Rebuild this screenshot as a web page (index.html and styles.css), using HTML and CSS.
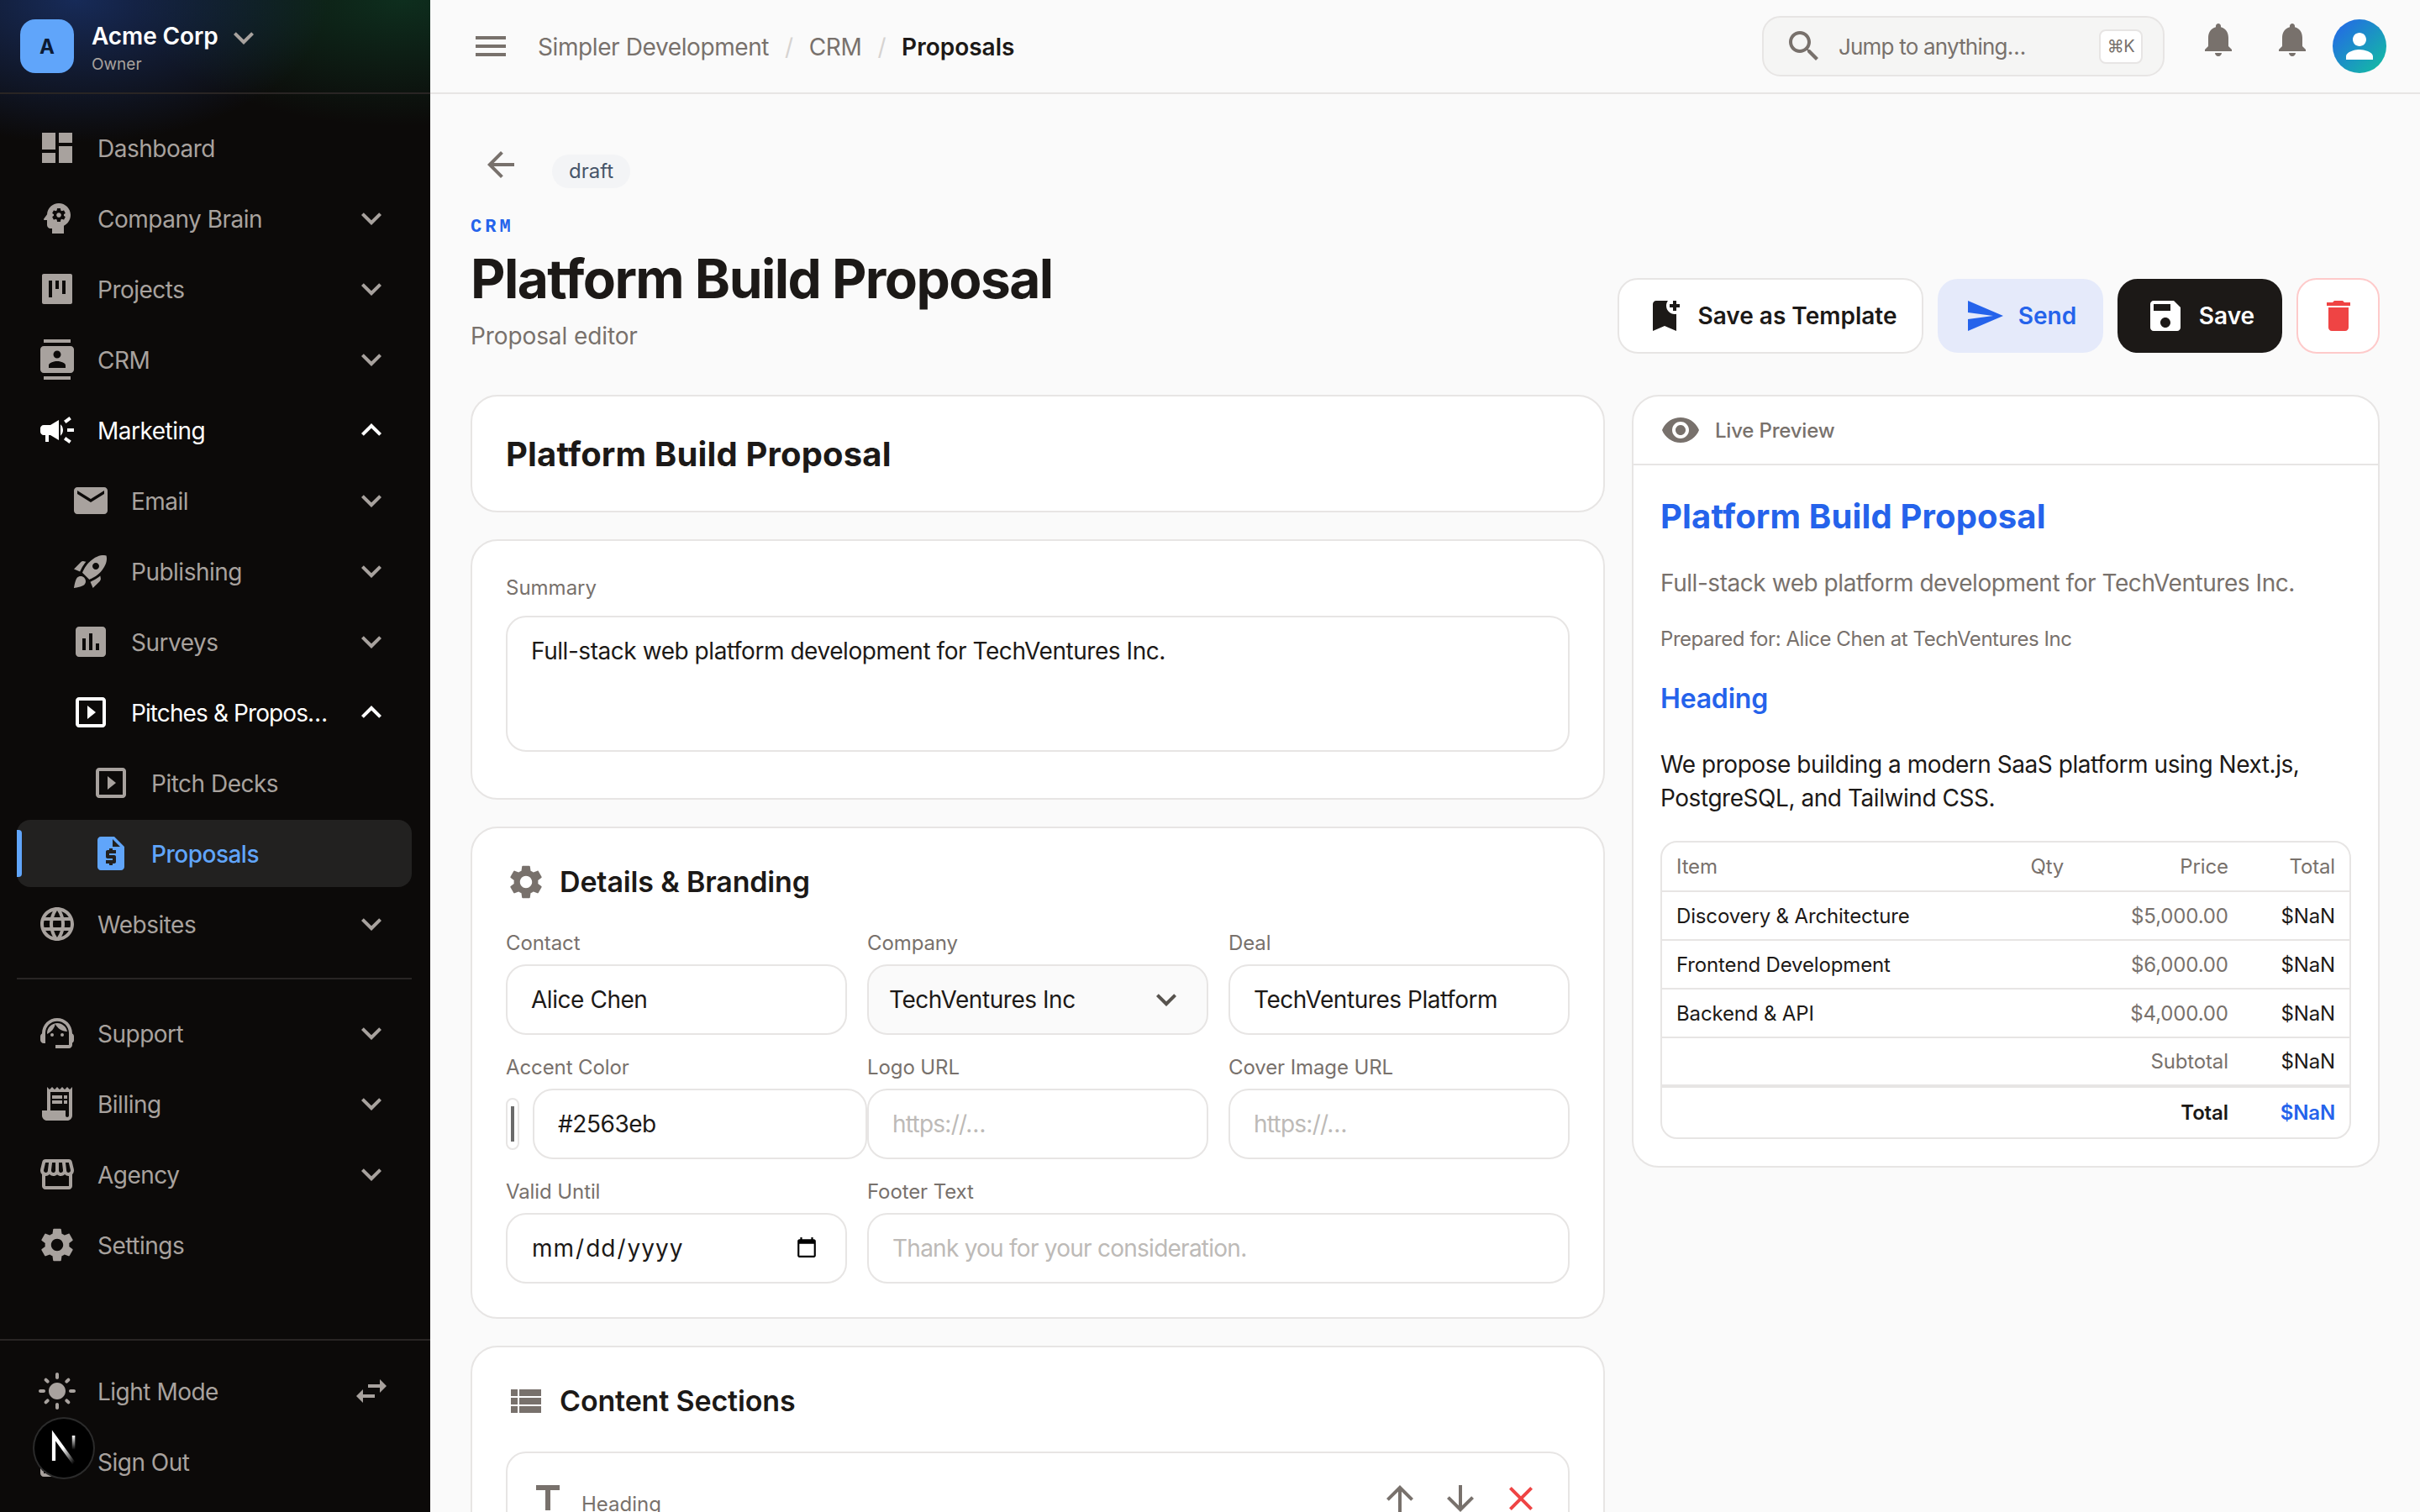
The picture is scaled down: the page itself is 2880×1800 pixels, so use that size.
FILE: index.html
```html
<!DOCTYPE html>
<html lang="en">
<head>
<meta charset="utf-8">
<title>Platform Build Proposal</title>
<link rel="stylesheet" href="styles.css">
</head>
<body>
<svg class="sprite" width="0" height="0">
<defs>
<symbol id="i-dashboard" viewBox="0 0 24 24"><path d="M3 13h8V3H3v10zm0 8h8v-6H3v6zm10 0h8V11h-8v10zm0-18v6h8V3h-8z"/></symbol>
<symbol id="i-brain" viewBox="0 0 24 24"><path d="M13 8.57c-.79 0-1.43.64-1.43 1.43s.64 1.43 1.43 1.43 1.43-.64 1.43-1.43-.64-1.43-1.43-1.43z"/><path d="M13 3C9.25 3 6.2 5.94 6.02 9.64L4.1 12.2c-.25.33-.01.8.4.8H6v3c0 1.1.9 2 2 2h1v3h7v-4.68c2.36-1.12 4-3.53 4-6.32 0-3.87-3.13-7-7-7zm3 7c0 .13-.01.26-.03.39l.83.66c.08.06.1.16.05.25l-.8 1.39c-.05.09-.16.12-.24.09l-.99-.4c-.21.16-.43.29-.67.39L14 13.83c-.01.1-.1.17-.2.17h-1.6c-.1 0-.18-.07-.2-.17l-.15-1.06c-.25-.1-.47-.23-.68-.39l-.99.4c-.09.03-.2 0-.25-.09l-.8-1.39c-.05-.08-.03-.19.05-.25l.84-.66c-.02-.13-.03-.26-.03-.39 0-.13.02-.27.04-.39l-.85-.66c-.08-.06-.1-.16-.05-.26l.8-1.38c.05-.09.15-.12.24-.09l1 .4c.2-.15.43-.29.67-.39L12 6.17c.02-.1.1-.17.2-.17h1.6c.1 0 .18.07.19.17l.15 1.06c.24.1.46.23.67.39l1-.4c.09-.03.2 0 .24.09l.8 1.38c.05.09.03.2-.05.26l-.85.66c.03.12.05.25.05.39z"/></symbol>
<symbol id="i-kanban" viewBox="0 0 24 24"><path d="M20 3H4c-.55 0-1 .45-1 1v16c0 .55.45 1 1 1h16c.55 0 1-.45 1-1V4c0-.55-.45-1-1-1zM9 17H7V7h2v10zm4-5h-2V7h2v5zm4 3h-2V7h2v8z"/></symbol>
<symbol id="i-contacts" viewBox="0 0 24 24"><path d="M20 0H4v2h16V0zM4 24h16v-2H4v2zM20 4H4c-1.1 0-2 .9-2 2v12c0 1.1.9 2 2 2h16c1.1 0 2-.9 2-2V6c0-1.1-.9-2-2-2zm-8 2.75c1.24 0 2.25 1.01 2.25 2.25s-1.01 2.25-2.25 2.25S9.75 10.24 9.75 9 10.76 6.75 12 6.75zM17 17H7v-1.5c0-1.67 3.33-2.5 5-2.5s5 .83 5 2.5V17z"/></symbol>
<symbol id="i-campaign" viewBox="0 0 24 24"><path d="M18 11v2h4v-2h-4zm-2 6.61c.96.71 2.21 1.65 3.2 2.39.4-.53.8-1.07 1.2-1.6-.99-.74-2.24-1.68-3.2-2.4-.4.54-.8 1.08-1.2 1.61zM20.4 5.6c-.4-.53-.8-1.07-1.2-1.6-.99.74-2.24 1.68-3.2 2.4.4.53.8 1.07 1.2 1.6.96-.72 2.21-1.65 3.2-2.4zM4 9c-1.1 0-2 .9-2 2v2c0 1.1.9 2 2 2h1v4h2v-4h1l5 3V6L8 9H4zm11.5 3c0-1.33-.58-2.53-1.5-3.35v6.69c.92-.81 1.5-2.01 1.5-3.34z"/></symbol>
<symbol id="i-email" viewBox="0 0 24 24"><path d="M20 4H4c-1.1 0-1.99.9-1.99 2L2 18c0 1.1.9 2 2 2h16c1.1 0 2-.9 2-2V6c0-1.1-.9-2-2-2zm0 4l-8 5-8-5V6l8 5 8-5v2z"/></symbol>
<symbol id="i-rocket" viewBox="0 0 24 24"><path d="M9.19 6.35c-2.04 2.29-3.44 5.58-3.57 5.89L2 10.69l4.05-4.05c.47-.47 1.15-.68 1.81-.55l1.33.26zM11.17 17s3.74-1.55 5.89-3.7c5.4-5.4 4.5-9.62 4.21-10.57-.95-.3-5.17-1.19-10.57 4.21C8.55 9.09 7 12.83 7 12.83L11.17 17zm6.48-2.19c-2.29 2.04-5.58 3.44-5.89 3.57L13.31 22l4.05-4.05c.47-.47.68-1.15.55-1.81l-.26-1.33zM9 18c0 .83-.34 1.58-.88 2.12C6.94 21.3 2 22 2 22s.7-4.94 1.88-6.12C4.42 15.34 5.17 15 6 15c1.66 0 3 1.34 3 3zm4-9c0-1.1.9-2 2-2s2 .9 2 2-.9 2-2 2-2-.9-2-2z"/></symbol>
<symbol id="i-poll" viewBox="0 0 24 24"><path d="M19 3H5c-1.1 0-2 .9-2 2v14c0 1.1.9 2 2 2h14c1.1 0 2-.9 2-2V5c0-1.1-.9-2-2-2zM9 17H7v-7h2v7zm4 0h-2V7h2v10zm4 0h-2v-4h2v4z"/></symbol>
<symbol id="i-slides" viewBox="0 0 24 24"><path d="M10 8v8l5-4-5-4zm9-5H5c-1.1 0-2 .9-2 2v14c0 1.1.9 2 2 2h14c1.1 0 2-.9 2-2V5c0-1.1-.9-2-2-2zm0 16H5V5h14v14z"/></symbol>
<symbol id="i-quote" viewBox="0 0 24 24"><path d="M14 2H6c-1.1 0-1.99.9-1.99 2L4 20c0 1.1.89 2 1.99 2H18c1.1 0 2-.9 2-2V8l-6-6zm1 10h-4v1h3c.55 0 1 .45 1 1v3c0 .55-.45 1-1 1h-1v1h-2v-1H9v-2h4v-1h-3c-.55 0-1-.45-1-1v-3c0-.55.45-1 1-1h1V9h2v1h2v2zm-2-4V3.5L17.5 8H13z"/></symbol>
<symbol id="i-globe" viewBox="0 0 24 24"><path d="M11.99 2C6.47 2 2 6.48 2 12s4.47 10 9.99 10C17.52 22 22 17.52 22 12S17.52 2 11.99 2zm6.93 6h-2.95c-.32-1.25-.78-2.45-1.38-3.56 1.84.63 3.37 1.91 4.33 3.56zM12 4.04c.83 1.2 1.48 2.53 1.91 3.96h-3.82c.43-1.43 1.08-2.76 1.91-3.96zM4.26 14C4.1 13.36 4 12.69 4 12s.1-1.36.26-2h3.38c-.08.66-.14 1.32-.14 2 0 .68.06 1.34.14 2H4.26zm.82 2h2.95c.32 1.25.78 2.45 1.38 3.56-1.84-.63-3.37-1.9-4.33-3.56zm2.95-8H5.08c.96-1.66 2.49-2.93 4.33-3.56C8.81 5.55 8.35 6.75 8.03 8zM12 19.96c-.83-1.2-1.48-2.53-1.91-3.96h3.82c-.43 1.43-1.08 2.76-1.91 3.96zM14.34 14H9.66c-.09-.66-.16-1.32-.16-2 0-.68.07-1.35.16-2h4.68c.09.65.16 1.32.16 2 0 .68-.07 1.34-.16 2zm.25 5.56c.6-1.11 1.06-2.31 1.38-3.56h2.95c-.96 1.65-2.49 2.93-4.33 3.56zM16.36 14c.08-.66.14-1.32.14-2 0-.68-.06-1.34-.14-2h3.38c.16.64.26 1.31.26 2s-.1 1.36-.26 2h-3.38z"/></symbol>
<symbol id="i-agent" viewBox="0 0 24 24"><path d="M21 12.22C21 6.73 16.74 3 12 3c-4.69 0-9 3.65-9 9.28-.6.34-1 .98-1 1.72v2c0 1.1.9 2 2 2h1v-6.1c0-3.87 3.13-7 7-7s7 3.13 7 7V19h-8v2h8c1.1 0 2-.9 2-2v-1.22c.59-.31 1-.92 1-1.64v-2.3c0-.7-.41-1.31-1-1.62z"/><circle cx="9" cy="13" r="1"/><circle cx="15" cy="13" r="1"/><path d="M18 11.03C17.52 8.18 15.04 6 12.05 6c-3.03 0-6.29 2.51-6.03 6.45 2.47-1.01 4.33-3.21 4.86-5.89 1.31 2.63 4 4.44 7.12 4.47z"/></symbol>
<symbol id="i-receipt" viewBox="0 0 24 24"><path d="M19.5 3.5L18 2l-1.5 1.5L15 2l-1.5 1.5L12 2l-1.5 1.5L9 2 7.5 3.5 6 2v14H3v3c0 1.66 1.34 3 3 3h12c1.66 0 3-1.34 3-3V2l-1.5 1.5zM19 19c0 .55-.45 1-1 1s-1-.45-1-1v-3H8V5h11v14z"/><path d="M9 7h6v2H9zm7 0h2v2h-2zm-7 3h6v2H9zm7 0h2v2h-2z"/></symbol>
<symbol id="i-store" viewBox="0 0 24 24"><path d="M21.9 8.89l-1.05-4.37c-.22-.9-1-1.52-1.91-1.52H5.05c-.9 0-1.69.63-1.9 1.52L2.1 8.89c-.24 1.02-.02 2.06.62 2.88.08.11.19.19.28.29V19c0 1.1.9 2 2 2h14c1.1 0 2-.9 2-2v-6.94c.09-.09.2-.18.28-.28.64-.82.87-1.87.62-2.89zm-2.99-3.9l1.05 4.37c.1.42.01.84-.25 1.17-.14.18-.44.47-.94.47-.61 0-1.14-.49-1.21-1.14L16.98 5l1.93-.01zM13 5h1.96l.54 4.52c.05.39-.07.78-.33 1.07-.22.26-.54.41-.95.41-.67 0-1.22-.59-1.22-1.31V5zM8.49 9.52L9.04 5H11v4.69c0 .72-.55 1.31-1.29 1.31-.34 0-.65-.15-.89-.41-.25-.29-.37-.68-.33-1.07zm-4.45-.16L5.05 5h1.97l-.58 4.86c-.08.65-.6 1.14-1.21 1.14-.49 0-.8-.29-.93-.47-.27-.32-.36-.75-.26-1.17zM5 19v-6.03c.08.01.15.03.23.03.87 0 1.66-.36 2.24-.95.6.6 1.4.95 2.31.95.87 0 1.65-.36 2.23-.93.59.57 1.39.93 2.29.93.84 0 1.64-.35 2.24-.95.58.59 1.37.95 2.24.95.08 0 .15-.02.23-.03V19H5z"/></symbol>
<symbol id="i-gear" viewBox="0 0 24 24"><path d="M19.14 12.94c.04-.3.06-.61.06-.94 0-.32-.02-.64-.07-.94l2.03-1.58c.18-.14.23-.41.12-.61l-1.92-3.32c-.12-.22-.37-.29-.59-.22l-2.39.96c-.5-.38-1.03-.7-1.62-.94l-.36-2.54c-.04-.24-.24-.41-.48-.41h-3.84c-.24 0-.43.17-.47.41l-.36 2.54c-.59.24-1.13.57-1.62.94l-2.39-.96c-.22-.08-.47 0-.59.22L2.74 8.87c-.12.21-.08.47.12.61l2.03 1.58c-.05.3-.09.63-.09.94s.02.64.07.94l-2.03 1.58c-.18.14-.23.41-.12.61l1.92 3.32c.12.22.37.29.59.22l2.39-.96c.5.38 1.03.7 1.62.94l.36 2.54c.05.24.24.41.48.41h3.84c.24 0 .44-.17.47-.41l.36-2.54c.59-.24 1.13-.56 1.62-.94l2.39.96c.22.08.47 0 .59-.22l1.92-3.32c.12-.22.07-.47-.12-.61l-2.01-1.58zM12 15.6c-1.98 0-3.6-1.62-3.6-3.6s1.62-3.6 3.6-3.6 3.6 1.62 3.6 3.6-1.62 3.6-3.6 3.6z"/></symbol>
<symbol id="i-sun" viewBox="0 0 24 24"><path d="M12 7c-2.76 0-5 2.24-5 5s2.24 5 5 5 5-2.24 5-5-2.24-5-5-5zM2 13h2c.55 0 1-.45 1-1s-.45-1-1-1H2c-.55 0-1 .45-1 1s.45 1 1 1zm18 0h2c.55 0 1-.45 1-1s-.45-1-1-1h-2c-.55 0-1 .45-1 1s.45 1 1 1zM11 2v2c0 .55.45 1 1 1s1-.45 1-1V2c0-.55-.45-1-1-1s-1 .45-1 1zm0 18v2c0 .55.45 1 1 1s1-.45 1-1v-2c0-.55-.45-1-1-1s-1 .45-1 1zM5.99 4.58c-.39-.39-1.03-.39-1.41 0-.39.39-.39 1.03 0 1.41l1.06 1.06c.39.39 1.03.39 1.41 0s.39-1.03 0-1.41L5.99 4.58zm12.37 12.37c-.39-.39-1.03-.39-1.41 0-.39.39-.39 1.03 0 1.41l1.06 1.06c.39.39 1.03.39 1.41 0 .39-.39.39-1.03 0-1.41l-1.06-1.06zm1.06-10.96c.39-.39.39-1.03 0-1.41-.39-.39-1.03-.39-1.41 0l-1.06 1.06c-.39.39-.39 1.03 0 1.41s1.03.39 1.41 0l1.06-1.06zM7.05 18.36c.39-.39.39-1.03 0-1.41-.39-.39-1.03-.39-1.41 0l-1.06 1.06c-.39.39-.39 1.03 0 1.41s1.03.39 1.41 0l1.06-1.06z"/></symbol>
<symbol id="i-swap" viewBox="0 0 24 24"><path d="M6.99 11L3 15l3.99 4v-3H14v-2H6.99v-3zM21 9l-3.99-4v3H10v2h7.01v3L21 9z"/></symbol>
<symbol id="i-logout" viewBox="0 0 24 24"><path d="M17 7l-1.41 1.41L18.17 11H8v2h10.17l-2.58 2.58L17 17l5-5zM4 5h8V3H4c-1.1 0-2 .9-2 2v14c0 1.1.9 2 2 2h8v-2H4V5z"/></symbol>
<symbol id="i-more" viewBox="0 0 24 24"><path d="M16.59 8.59L12 13.17 7.41 8.59 6 10l6 6 6-6z"/></symbol>
<symbol id="i-less" viewBox="0 0 24 24"><path d="M12 8l-6 6 1.41 1.41L12 10.83l4.59 4.58L18 14z"/></symbol>
<symbol id="i-menu" viewBox="0 0 24 24"><path d="M3 18h18v-2H3v2zm0-5h18v-2H3v2zm0-7v2h18V6H3z"/></symbol>
<symbol id="i-search" viewBox="0 0 24 24"><path d="M15.5 14h-.79l-.28-.27C15.41 12.59 16 11.11 16 9.5 16 5.91 13.09 3 9.5 3S3 5.91 3 9.5 5.91 16 9.5 16c1.61 0 3.09-.59 4.23-1.57l.27.28v.79l5 4.99L20.49 19l-4.99-5zm-6 0C7.01 14 5 11.99 5 9.5S7.01 5 9.5 5 14 7.01 14 9.5 11.99 14 9.5 14z"/></symbol>
<symbol id="i-bell" viewBox="0 0 24 24"><path d="M12 22c1.1 0 2-.9 2-2h-4c0 1.1.89 2 2 2zm6-6v-5c0-3.07-1.64-5.64-4.5-6.32V4c0-.83-.67-1.5-1.5-1.5s-1.5.67-1.5 1.5v.68C7.63 5.36 6 7.92 6 11v5l-2 2v1h16v-1l-2-2z"/></symbol>
<symbol id="i-person" viewBox="0 0 24 24"><path d="M12 12c2.21 0 4-1.79 4-4s-1.79-4-4-4-4 1.79-4 4 1.79 4 4 4zm0 2c-2.67 0-8 1.34-8 4v2h16v-2c0-2.66-5.33-4-8-4z"/></symbol>
<symbol id="i-back" viewBox="0 0 24 24"><path d="M20 11H7.83l5.59-5.59L12 4l-8 8 8 8 1.41-1.41L7.83 13H20v-2z"/></symbol>
<symbol id="i-bookmark" viewBox="0 0 24 24"><path d="M21 7h-2v2h-2V7h-2V5h2V3h2v2h2v2zm-2 14l-7-3-7 3V5c0-1.1.9-2 2-2h7c-.63.84-1 1.87-1 3 0 2.76 2.24 5 5 5 .34 0 .68-.03 1-.1V21z"/></symbol>
<symbol id="i-send" viewBox="0 0 24 24"><path d="M2.01 21L23 12 2.01 3 2 10l15 2-15 2z"/></symbol>
<symbol id="i-save" viewBox="0 0 24 24"><path d="M17 3H5c-1.11 0-2 .9-2 2v14c0 1.1.89 2 2 2h14c1.1 0 2-.9 2-2V7l-4-4zm-5 16c-1.66 0-3-1.34-3-3s1.34-3 3-3 3 1.34 3 3-1.34 3-3 3zm3-10H5V5h10v4z"/></symbol>
<symbol id="i-delete" viewBox="0 0 24 24"><path d="M6 19c0 1.1.9 2 2 2h8c1.1 0 2-.9 2-2V7H6v12zM19 4h-3.5l-1-1h-5l-1 1H5v2h14V4z"/></symbol>
<symbol id="i-eye" viewBox="0 0 24 24"><path d="M12 4.5C7 4.5 2.73 7.61 1 12c1.73 4.39 6 7.5 11 7.5s9.27-3.11 11-7.5c-1.73-4.39-6-7.5-11-7.5zM12 17c-2.76 0-5-2.24-5-5s2.24-5 5-5 5 2.24 5 5-2.24 5-5 5zm0-8c-1.66 0-3 1.34-3 3s1.34 3 3 3 3-1.34 3-3-1.34-3-3-3z"/></symbol>
<symbol id="i-list" viewBox="0 0 24 24"><path d="M3 14h4v-4H3v4zm0 5h4v-4H3v4zM3 9h4V5H3v4zm5 5h13v-4H8v4zm0 5h13v-4H8v4zM8 5v4h13V5H8z"/></symbol>
<symbol id="i-title" viewBox="0 0 24 24"><path d="M5 4v3h5.5v12h3V7H19V4z"/></symbol>
<symbol id="i-up" viewBox="0 0 24 24"><path d="M4 12l1.41 1.41L11 7.83V20h2V7.83l5.58 5.59L20 12l-8-8-8 8z"/></symbol>
<symbol id="i-down" viewBox="0 0 24 24"><path d="M20 12l-1.41-1.41L13 16.17V4h-2v12.17l-5.58-5.59L4 12l8 8 8-8z"/></symbol>
<symbol id="i-close" viewBox="0 0 24 24"><path d="M19 6.41L17.59 5 12 10.59 6.41 5 5 6.41 10.59 12 5 17.59 6.41 19 12 13.41 17.59 19 19 17.59 13.41 12z"/></symbol>
<linearGradient id="next-n" x1="0" y1="0" x2="1" y2="1"><stop offset="0.45" stop-color="#fff"/><stop offset="1" stop-color="#fff" stop-opacity="0"/></linearGradient>
<linearGradient id="next-bar" x1="0" y1="0" x2="0" y2="1"><stop offset="0" stop-color="#fff"/><stop offset="0.8" stop-color="#fff" stop-opacity="0"/></linearGradient>
</defs>
</svg>

<div class="app">
  <aside class="sidebar">
    <div class="brand">
      <div class="brand-logo">A</div>
      <div class="brand-text">
        <div class="brand-name">Acme Corp</div>
        <div class="brand-role">Owner</div>
      </div>
      <svg class="icon brand-chevron"><use href="#i-more"/></svg>
    </div>
    <nav class="nav">
      <a class="item"><svg class="icon"><use href="#i-dashboard"/></svg><span class="label">Dashboard</span></a>
      <a class="item"><svg class="icon"><use href="#i-brain"/></svg><span class="label">Company Brain</span><svg class="icon"><use href="#i-more"/></svg></a>
      <a class="item"><svg class="icon"><use href="#i-kanban"/></svg><span class="label">Projects</span><svg class="icon"><use href="#i-more"/></svg></a>
      <a class="item"><svg class="icon"><use href="#i-contacts"/></svg><span class="label">CRM</span><svg class="icon"><use href="#i-more"/></svg></a>
      <a class="item open"><svg class="icon"><use href="#i-campaign"/></svg><span class="label">Marketing</span><svg class="icon"><use href="#i-less"/></svg></a>
      <a class="item lvl1"><svg class="icon"><use href="#i-email"/></svg><span class="label">Email</span><svg class="icon"><use href="#i-more"/></svg></a>
      <a class="item lvl1"><svg class="icon"><use href="#i-rocket"/></svg><span class="label">Publishing</span><svg class="icon"><use href="#i-more"/></svg></a>
      <a class="item lvl1"><svg class="icon"><use href="#i-poll"/></svg><span class="label">Surveys</span><svg class="icon"><use href="#i-more"/></svg></a>
      <a class="item lvl1 open"><svg class="icon"><use href="#i-slides"/></svg><span class="label">Pitches &amp; Proposals</span><svg class="icon"><use href="#i-less"/></svg></a>
      <a class="item lvl2"><svg class="icon"><use href="#i-slides"/></svg><span class="label">Pitch Decks</span></a>
      <a class="item lvl2 active"><svg class="icon"><use href="#i-quote"/></svg><span class="label">Proposals</span></a>
      <a class="item"><svg class="icon"><use href="#i-globe"/></svg><span class="label">Websites</span><svg class="icon"><use href="#i-more"/></svg></a>
      <div class="nav-divider"></div>
      <a class="item"><svg class="icon"><use href="#i-agent"/></svg><span class="label">Support</span><svg class="icon"><use href="#i-more"/></svg></a>
      <a class="item"><svg class="icon"><use href="#i-receipt"/></svg><span class="label">Billing</span><svg class="icon"><use href="#i-more"/></svg></a>
      <a class="item"><svg class="icon"><use href="#i-store"/></svg><span class="label">Agency</span><svg class="icon"><use href="#i-more"/></svg></a>
      <a class="item"><svg class="icon"><use href="#i-gear"/></svg><span class="label">Settings</span></a>
    </nav>
    <div class="side-foot">
      <a class="item"><svg class="icon"><use href="#i-sun"/></svg><span class="label">Light Mode</span><svg class="icon"><use href="#i-swap"/></svg></a>
      <a class="item"><svg class="icon"><use href="#i-logout"/></svg><span class="label">Sign Out</span></a>
    </div>
    <div class="next-badge">
      <svg viewBox="0 0 40 40" width="60" height="60"><path d="M12 30V10l16 22" fill="none" stroke="url(#next-n)" stroke-width="2.8"/><rect x="26.5" y="10" width="2.4" height="14" fill="url(#next-bar)"/></svg>
    </div>
  </aside>

  <div class="main">
    <header class="topbar">
      <svg class="icon tb-menu"><use href="#i-menu"/></svg>
      <div class="crumbs">
        <span>Simpler Development</span><span class="sep">/</span><span>CRM</span><span class="sep">/</span><strong>Proposals</strong>
      </div>
      <div class="search">
        <svg class="icon"><use href="#i-search"/></svg>
        <span class="search-text">Jump to anything…</span>
        <kbd class="kbd">⌘K</kbd>
      </div>
      <svg class="icon tb-bell"><use href="#i-bell"/></svg>
      <svg class="icon tb-bell"><use href="#i-bell"/></svg>
      <div class="avatar"><svg class="icon"><use href="#i-person"/></svg></div>
    </header>

    <main class="page">
      <div class="back-row">
        <button class="back-btn"><svg class="icon"><use href="#i-back"/></svg></button>
        <span class="chip">draft</span>
      </div>
      <div class="page-head">
        <div>
          <div class="eyebrow">CRM</div>
          <h1 class="page-title">Platform Build Proposal</h1>
          <p class="page-sub">Proposal editor</p>
        </div>
        <div class="actions">
          <button class="btn btn-outline"><svg class="icon"><use href="#i-bookmark"/></svg>Save as Template</button>
          <button class="btn btn-soft"><svg class="icon"><use href="#i-send"/></svg>Send</button>
          <button class="btn btn-dark"><svg class="icon"><use href="#i-save"/></svg>Save</button>
          <button class="btn btn-danger"><svg class="icon"><use href="#i-delete"/></svg></button>
        </div>
      </div>

      <div class="columns">
        <div class="stack">
          <section class="card">
            <input class="title-input" value="Platform Build Proposal">
          </section>
          <section class="card">
            <label class="label-top">Summary</label>
            <textarea class="textarea">Full-stack web platform development for TechVentures Inc.</textarea>
          </section>
          <section class="card">
            <h2 class="section-head"><svg class="icon"><use href="#i-gear"/></svg>Details &amp; Branding</h2>
            <div class="form-grid">
              <div class="field"><label class="field-label">Contact</label><input class="input" value="Alice Chen"></div>
              <div class="field"><label class="field-label">Company</label>
                <div class="input select"><span>TechVentures Inc</span><svg class="icon"><use href="#i-more"/></svg></div></div>
              <div class="field"><label class="field-label">Deal</label><input class="input" value="TechVentures Platform"></div>
              <div class="field"><label class="field-label">Accent Color</label>
                <div class="color-row"><span class="swatch"><i></i></span><input class="input color-text" value="#2563eb"></div></div>
              <div class="field"><label class="field-label">Logo URL</label><input class="input" placeholder="https://…"></div>
              <div class="field"><label class="field-label">Cover Image URL</label><input class="input" placeholder="https://…"></div>
              <div class="field"><label class="field-label">Valid Until</label><input class="input date" type="date"></div>
              <div class="field span2"><label class="field-label">Footer Text</label><input class="input" placeholder="Thank you for your consideration."></div>
            </div>
          </section>
          <section class="card">
            <h2 class="section-head"><svg class="icon"><use href="#i-list"/></svg>Content Sections</h2>
            <div class="block">
              <div class="block-head">
                <svg class="icon"><use href="#i-title"/></svg>
                <span class="block-name">Heading</span>
                <svg class="icon"><use href="#i-up"/></svg>
                <svg class="icon"><use href="#i-down"/></svg>
                <svg class="icon icon-red"><use href="#i-close"/></svg>
              </div>
            </div>
          </section>
        </div>

        <aside class="card preview">
          <div class="preview-head"><svg class="icon"><use href="#i-eye"/></svg>Live Preview</div>
          <div class="preview-body">
            <h2 class="pv-title">Platform Build Proposal</h2>
            <p class="pv-summary">Full-stack web platform development for TechVentures Inc.</p>
            <p class="pv-prepared">Prepared for: Alice Chen at TechVentures Inc</p>
            <h3 class="pv-heading">Heading</h3>
            <p class="pv-para">We propose building a modern SaaS platform using Next.js, PostgreSQL, and Tailwind CSS.</p>
            <div class="table-wrap">
              <table class="pv-table">
                <colgroup><col class="c-item"><col class="c-qty"><col class="c-price"><col class="c-total"></colgroup>
                <thead><tr><th>Item</th><th>Qty</th><th class="num">Price</th><th class="num">Total</th></tr></thead>
                <tbody>
                  <tr><td>Discovery &amp; Architecture</td><td></td><td class="num muted">$5,000.00</td><td class="num">$NaN</td></tr>
                  <tr><td>Frontend Development</td><td></td><td class="num muted">$6,000.00</td><td class="num">$NaN</td></tr>
                  <tr><td>Backend &amp; API</td><td></td><td class="num muted">$4,000.00</td><td class="num">$NaN</td></tr>
                  <tr class="sub"><td></td><td></td><td class="num muted">Subtotal</td><td class="num">$NaN</td></tr>
                  <tr class="grand"><td></td><td></td><td class="num">Total</td><td class="num accent">$NaN</td></tr>
                </tbody>
              </table>
            </div>
          </div>
        </aside>
      </div>
    </main>
  </div>
</div>
</body>
</html>
```

FILE: styles.css
```css
* { box-sizing: border-box; }
html, body { margin: 0; height: 100%; overflow: hidden; }
body { font-family: Inter, "Liberation Sans", sans-serif; color: #1c1917; background: #fafafa; font-size: 28px; letter-spacing: -0.45px; }
.sprite { position: absolute; }
.icon { width: 48px; height: 48px; fill: currentColor; flex: none; display: block; }
h1, h2, h3, p { margin: 0; }
button, input, textarea { font-family: inherit; letter-spacing: inherit; }

.app { display: flex; height: 1800px; }

/* sidebar */
.sidebar {
  width: 512px; flex: none; position: relative; display: flex; flex-direction: column; color: #a8a29e;
  background:
    radial-gradient(300px 170px at 90px 0, rgba(30, 64, 140, .6), transparent 100%),
    radial-gradient(320px 150px at 480px 0, rgba(16, 90, 55, .45), transparent 100%),
    #0c0a09;
}
.brand { height: 112px; display: flex; align-items: center; padding-left: 24px; border-bottom: 2px solid #292524; flex: none; }
.brand-logo { width: 64px; height: 64px; border-radius: 18px; background: #60a5fa; color: #0c1a33; font-weight: 700; font-size: 24px; display: flex; align-items: center; justify-content: center; letter-spacing: 0; }
.brand-text { margin-left: 21px; padding-top: 3px; letter-spacing: 0; }
.brand-name { color: #fff; font-size: 28px; font-weight: 600; line-height: 36px; margin-top: 2px; letter-spacing: -0.1px; }
.brand-role { font-size: 19px; line-height: 28px; color: #a8a29e; margin-top: 2px; }
.brand-chevron { margin: -20px 0 0 6px; }

.nav { flex: 1; padding: 24px 22px 0 20px; display: flex; flex-direction: column; gap: 4px; min-height: 0; }
.item { height: 80px; flex: none; display: flex; align-items: center; gap: 24px; padding: 0 24px; border-radius: 16px; position: relative; }
.item .label { flex: 1; min-width: 0; white-space: nowrap; overflow: hidden; text-overflow: ellipsis; font-size: 28px; letter-spacing: -0.5px; padding-top: 1px; }
.lvl1 { padding-left: 64px; }
.lvl2 { padding-left: 88px; }
.open { color: #fff; }
.lvl1.open .label { margin-right: -6px; letter-spacing: -0.9px; }
.active { background: #222120; color: #60a5fa; font-weight: 500; }
.active::before { content: ""; position: absolute; left: 0; top: 12px; bottom: 12px; width: 6px; background: #60a5fa; border-radius: 0 4px 4px 0; }
.nav-divider { height: 2px; background: #292524; margin: 20px 0; flex: none; }
.side-foot { flex: none; border-top: 2px solid #292524; padding: 20px 22px 20px 20px; display: flex; flex-direction: column; gap: 4px; }
.next-badge { position: absolute; left: 41px; top: 1689px; width: 70px; height: 70px; border-radius: 50%; background: #000; box-shadow: 0 0 0 2px #2b2b2b; display: flex; align-items: center; justify-content: center; }

/* main */
.main { flex: 1; min-width: 0; display: flex; flex-direction: column; }
.topbar { height: 112px; flex: none; display: flex; align-items: center; padding: 0 40px 0 48px; border-bottom: 2px solid #e7e5e4; color: #78716c; }
.crumbs { flex: 1; display: flex; align-items: center; margin-left: 32px; font-size: 28px; letter-spacing: -0.4px; padding-top: 2px; }
.crumbs .sep { color: #d6d3d1; margin: 0 19px; }
.crumbs strong { color: #1c1917; font-weight: 600; letter-spacing: 0; }
.search { width: 479px; height: 72px; border: 2px solid #e7e5e4; border-radius: 22px; background: #f5f5f4; display: flex; align-items: center; padding: 0 24px; gap: 17px; }
.search-text { flex: 1; font-size: 26px; letter-spacing: -0.8px; }
.kbd { width: 52px; height: 41px; background: #fff; border: 2px solid #e7e5e4; border-radius: 8px; font-family: inherit; font-size: 20px; display: flex; align-items: center; justify-content: center; }
.tb-bell { margin: 0 0 16px 40px; }
.avatar { width: 64px; height: 64px; border-radius: 50%; margin-left: 24px; background: linear-gradient(135deg, #2563eb, #14b8a6 90%); color: #fff; display: flex; align-items: center; justify-content: center; }

.page { flex: 1; min-height: 0; overflow: hidden; padding: 48px 48px 0; }
.back-row { display: flex; align-items: center; gap: 24px; }
.back-btn { width: 72px; height: 72px; padding: 12px; border: 0; background: none; color: #78716c; }
.chip { height: 40px; margin: 16px 0 0 1px; padding: 0 20px; border-radius: 20px; background: #f3f4f6; color: #475569; font-size: 24px; line-height: 40px; letter-spacing: 0; }
.page-head { display: flex; justify-content: space-between; align-items: flex-end; margin-top: 24px; }
.eyebrow { font-family: "Liberation Mono", monospace; font-size: 22px; line-height: 28px; font-weight: 700; letter-spacing: 4px; color: #2563eb; margin-top: 1px; }
.page-title { font-size: 64px; line-height: 88px; font-weight: 700; letter-spacing: -1.55px; margin-top: 3px; }
.page-sub { font-size: 28px; line-height: 40px; color: #78716c; margin: 4px 0 1px; letter-spacing: -0.1px; }
.actions { display: flex; align-items: center; gap: 17px; }
.btn { height: 88px; border-radius: 24px; border: 0; font-size: 28px; font-weight: 600; display: flex; align-items: center; justify-content: center; gap: 16px; padding: 0 24px; white-space: nowrap; letter-spacing: 0; }
.btn-outline { height: 90px; width: 364px; background: #fff; border: 2px solid #e7e5e4; color: #1c1917; }
.btn-soft { width: 197px; background: #e5eafa; color: #2563eb; }
.btn-dark { width: 196px; background: #1c1917; color: #fff; }
.btn-danger { height: 90px; width: 99px; padding: 0; background: #fff; border: 2px solid #fecaca; color: #ef4444; }

.columns { display: grid; grid-template-columns: 1350px 890px; gap: 32px; margin-top: 49px; align-items: start; }
.stack { display: flex; flex-direction: column; gap: 32px; }
.card { background: #fff; border: 2px solid #e7e5e4; border-radius: 32px; padding: 40px; }

.title-input { display: block; width: 100%; height: 56px; border: 0; padding: 0; outline: 0; font-size: 40px; font-weight: 700; letter-spacing: 0.15px; color: #1c1917; background: none; }
.label-top { display: block; font-size: 24px; line-height: 32px; color: #78716c; margin-bottom: 17px; letter-spacing: 0; }
.textarea { display: block; width: 100%; height: 162px; margin-bottom: 15px; border: 2px solid #e7e5e4; border-radius: 24px; padding: 20px 28px; font-size: 28px; line-height: 40px; color: #1c1917; resize: none; outline: 0; }
.section-head { display: flex; align-items: center; gap: 16px; font-size: 34px; font-weight: 600; line-height: 48px; letter-spacing: -0.15px; }
.section-head .icon { color: #78716c; }
.form-grid { display: grid; grid-template-columns: repeat(3, 1fr); column-gap: 24px; row-gap: 23px; margin-top: 33px; }
.field { min-width: 0; display: flex; flex-direction: column; gap: 9px; }
.span2 { grid-column: span 2; }
.field-label { font-size: 24px; line-height: 32px; color: #78716c; letter-spacing: -0.1px; }
.input { display: block; width: 100%; height: 84px; border: 2px solid #e7e5e4; border-radius: 24px; padding: 0 28px; font-size: 28px; color: #1c1917; background: #fff; outline: 0; }
.input::placeholder { color: #bdbab7; opacity: 1; letter-spacing: -0.75px; }
.select { display: flex; align-items: center; justify-content: space-between; background: #fafafa; padding: 0 24px 0 24px; }
.select .icon { color: #57534e; }
.color-row { display: flex; align-items: center; gap: 16px; margin-right: -24px; }
.swatch { width: 16px; height: 62px; flex: none; border: 2px solid #e7e5e4; border-radius: 8px; padding: 8px 4px; }
.swatch i { display: block; height: 100%; width: 4px; background: #6b6b6b; }
.color-text { flex: 1; width: auto; min-width: 0; }
.date { padding-right: 30px; letter-spacing: 1px; }

.block { margin-top: 36px; border: 2px solid #e7e5e4; border-radius: 24px; padding: 30px 32px 30px 24px; }
.block-head { display: flex; align-items: center; gap: 24px; color: #78716c; }
.block-name { flex: 1; font-size: 24px; margin: 12px 0 0 -8px; letter-spacing: 0; }
.icon-red { color: #ef4444; }

.preview { padding: 0; }
.preview-head { height: 82px; display: flex; align-items: center; gap: 17px; padding: 0 32px; border-bottom: 2px solid #e7e5e4; color: #78716c; font-size: 24px; font-weight: 500; letter-spacing: -0.2px; }
.preview-body { padding: 33px 32px 32px; }
.pv-title { font-size: 40px; line-height: 56px; font-weight: 700; letter-spacing: 0.15px; color: #2563eb; }
.pv-summary { font-size: 28px; line-height: 40px; color: #78716c; margin-top: 31px; }
.pv-prepared { font-size: 24px; line-height: 34px; color: #78716c; margin-top: 30px; }
.pv-heading { font-size: 32px; line-height: 48px; font-weight: 600; letter-spacing: -0.2px; color: #2563eb; margin-top: 30px; }
.pv-para { font-size: 28px; line-height: 40px; margin-top: 34px; }
.table-wrap { margin-top: 31px; border: 2px solid #e7e5e4; border-radius: 20px; overflow: hidden; }
.pv-table { width: 100%; table-layout: fixed; border-collapse: collapse; font-size: 24px; letter-spacing: -0.15px; }
.c-item { width: 421px; }
.c-qty { width: 118px; }
.c-price { width: 151px; }
.c-total { width: 127px; }
.pv-table th, .pv-table td { height: 58px; padding: 0 17px; text-align: left; border-bottom: 2px solid #e7e5e4; font-weight: 400; }
.pv-table th { color: #78716c; }
.pv-table .num { text-align: right; }
.muted { color: #78716c; }
.pv-table .sub td { border-bottom-width: 4px; }
.pv-table .grand td { border-bottom: 0; font-weight: 600; height: 61px; }
.accent { color: #2563eb; }
```
